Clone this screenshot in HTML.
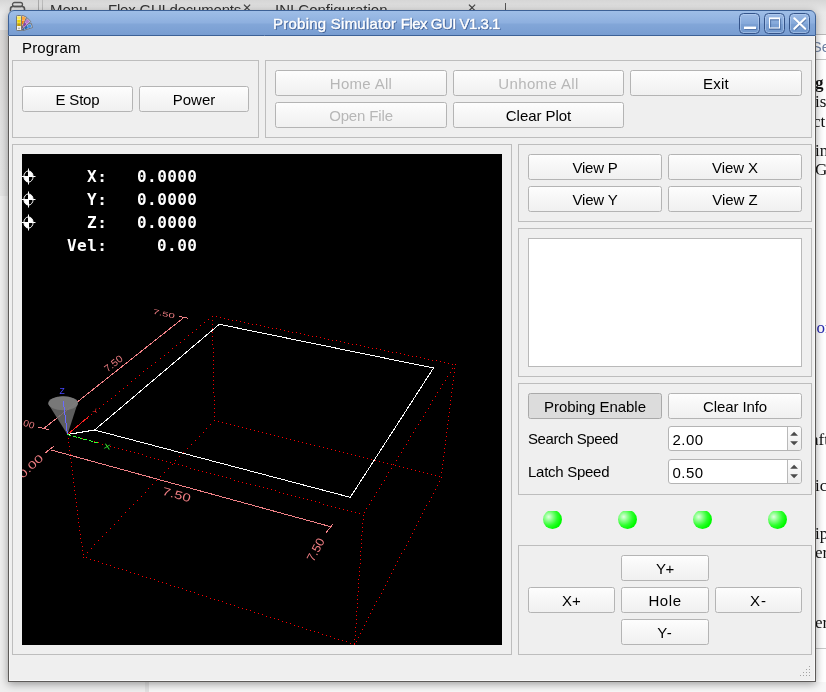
<!DOCTYPE html>
<html>
<head>
<meta charset="utf-8">
<title>Probing Simulator Flex GUI V1.3.1</title>
<style>
html,body{margin:0;padding:0;}
body{width:826px;height:692px;overflow:hidden;position:relative;background:#fff;font-family:"Liberation Sans",sans-serif;font-size:15px;color:#000;}
.abs{position:absolute;will-change:transform;}
/* ---------- background (browser behind) ---------- */
#bgtop{left:0;top:0;width:826px;height:34px;background:linear-gradient(#d6d6d6,#e9e9e9 12px,#ececec 34px);}
.bgt{color:#333;font-size:15px;white-space:pre;filter:blur(0.4px);}
.serif{font-family:"Liberation Serif",serif;font-size:17px;color:#111;white-space:pre;}
/* ---------- window ---------- */
#win{left:8px;top:10px;width:808px;height:672px;background:#efefef;box-shadow:0 2px 8px 0 rgba(0,0,0,.38);border-radius:6px 6px 0 0;}
#winb{left:8px;top:36px;width:806px;height:645px;border:1px solid #5d5b59;border-top:none;box-shadow:inset 1px -1px 0 #f8f8f8,inset -1px 0 0 #f8f8f8;}
#title{left:8px;top:10px;width:808px;height:26px;box-sizing:border-box;border:1px solid #3d6196;border-radius:6px 6px 0 0;background:linear-gradient(#9fbee7,#8eb0df 48%,#82a6d8 56%,#789dd1);}
#ttext{left:0px;top:10px;width:773px;height:26px;line-height:27px;text-align:center;color:#fff;font-size:15px;-webkit-text-stroke:.45px #fff;text-shadow:1px 1px 0 #3f6097,0 1px 0 #4b6da3,1px 0 1px #5575aa;white-space:pre;letter-spacing:-.11px;}
.tb{top:13px;width:21px;height:21px;box-sizing:border-box;border:1px solid #34548a;border-radius:4.5px;background:linear-gradient(#9dbbe5,#85a9da 50%,#7ba0d3 52%,#7198cd);box-shadow:inset 0 0 0 1px rgba(190,212,242,.55);}
/* ---------- widgets ---------- */
.frame{box-sizing:border-box;border:1px solid #bdbdbd;}
.btn{box-sizing:border-box;height:26px;border:1px solid #b4b4b4;border-radius:2.5px;background:linear-gradient(#fdfdfd,#f0f0f0);text-align:center;line-height:26px;font-size:15px;white-space:pre;}
.btn.dis{color:#b7b7b7;}
.btn.chk{background:#dcdcdc;border-color:#a9a9a9;}
.lbl{font-size:15px;white-space:pre;line-height:18px;}
.spin{box-sizing:border-box;height:25px;border:1px solid #b4b4b4;border-radius:3px;background:#fff;font-size:15px;line-height:25px;padding-left:3.5px;letter-spacing:.5px;}
.led{width:19px;height:19px;border-radius:50%;background:radial-gradient(circle at 30% 36%,#e2ffe2 0,#8cff8c 22%,#2dff2d 48%,#00fb00 70%,#00ec00 100%);clip-path:inset(1px 0 .2px 0);}
</style>
</head>
<body>
<!-- background -->
<div id="bgtop" class="abs"></div>
<div class="abs" style="left:0;top:30px;width:10px;height:166px;background:linear-gradient(#dbd9d7,#e3e3e3 60%,#e6e6e6);"></div>
<div class="abs" style="left:0;top:196px;width:10px;height:496px;background:#efefef;"></div>
<div class="abs" style="left:0;top:682px;width:145px;height:10px;background:#efefef;"></div>
<div class="abs" style="left:145px;top:682px;width:4px;height:10px;background:#e2e2e2;"></div>
<div class="abs" style="left:149px;top:682px;width:677px;height:10px;background:#f7f7f7;"></div>
<div class="abs" style="left:814px;top:34px;width:12px;height:1px;background:#b9b9b9;"></div>
<div class="abs" style="left:814px;top:59px;width:12px;height:1px;background:#c4c4c4;"></div>
<div class="abs" style="left:814px;top:648px;width:12px;height:1px;background:#c8c8c8;"></div>
<!-- browser tab bar behind -->
<svg class="abs" style="left:9px;top:1px" width="18" height="12" viewBox="0 0 18 12"><rect x="3.5" y="1.5" width="10" height="4" rx="2" fill="none" stroke="#555" stroke-width="1.3"/><rect x="1.5" y="5.5" width="14" height="8" rx="2.5" fill="none" stroke="#555" stroke-width="1.6"/></svg>
<div class="abs" style="left:38px;top:0;width:1px;height:12px;background:#aaa;"></div>
<div class="abs" style="left:42px;top:0;width:1px;height:12px;background:#bbb;"></div>
<div class="abs bgt" style="left:50px;top:1px;">Menu</div>
<div class="abs bgt" style="left:108px;top:1px;letter-spacing:-.2px;">Flex GUI documents</div>
<div class="abs bgt" style="left:242px;top:1px;color:#444;font-size:12px;">✕</div>
<div class="abs bgt" style="left:275px;top:1px;">INI Configuration</div>
<div class="abs bgt" style="left:467px;top:1px;color:#444;font-size:12px;">✕</div>
<div class="abs" style="left:505px;top:3px;width:1px;height:9px;background:#555;"></div>
<!-- web page behind, right edge -->
<div class="abs" style="left:816px;top:37px;width:10px;height:20px;overflow:hidden;"><div style="margin-left:-4px;font-size:14.5px;line-height:20px;color:#6f82a3;white-space:pre;">Se</div></div>
<div class="abs" style="left:816px;top:73px;width:10px;overflow:hidden;"><div class="serif" style="margin-left:-1px;line-height:19.3px;"><b>g</b>
is
<span style="margin-left:-2px">ct</span></div></div>
<div class="abs" style="left:816px;top:141px;width:10px;overflow:hidden;"><div class="serif" style="margin-left:-1px;line-height:19.3px;">in
G</div></div>
<div class="abs" style="left:816px;top:318px;width:10px;overflow:hidden;"><div class="serif" style="color:#2a2ab0;margin-left:.5px;">or</div></div>
<div class="abs" style="left:816px;top:430px;width:10px;overflow:hidden;"><div class="serif" style="margin-left:-5px;">aft</div></div>
<div class="abs" style="left:816px;top:476px;width:10px;overflow:hidden;"><div class="serif" style="margin-left:-1px;">ic</div></div>
<div class="abs" style="left:816px;top:524px;width:10px;overflow:hidden;"><div class="serif" style="margin-left:-1px;line-height:19.3px;">ip
er</div></div>
<div class="abs" style="left:816px;top:612.5px;width:10px;overflow:hidden;"><div class="serif" style="margin-left:-1px;">er</div></div>

<!-- window -->
<div id="win" class="abs"></div>
<div id="title" class="abs"></div>
<div id="ttext" class="abs"><span style="letter-spacing:.24px">Probing Simulator </span><span style="letter-spacing:-.5px">Flex GUI V1.3.1</span></div>
<!-- app icon -->
<svg class="abs" style="left:16px;top:15px" width="17" height="16" viewBox="0 0 17 16">
<g transform="rotate(72 2.6 14.5)"><rect x="0.4" y="0.6" width="4.6" height="15" fill="#dfe6f2" stroke="#6d6d6d" stroke-width=".8"/><rect x="1" y="1.4" width="3.4" height="3.4" fill="#4a90e0"/><rect x="1" y="5.2" width="3.4" height="3.4" fill="#2467b8"/><rect x="1" y="9" width="3.4" height="3" fill="#17498f"/></g>
<g transform="rotate(47 2.6 14.5)"><rect x="0.4" y="0.2" width="4.6" height="15" fill="#e8e0ee" stroke="#6d6d6d" stroke-width=".8"/><rect x="1" y="1" width="3.4" height="3.6" fill="#b77ad0"/><rect x="1" y="5" width="3.4" height="3.6" fill="#8e3fb0"/><rect x="1" y="9" width="3.4" height="3.2" fill="#6b2a8c"/></g>
<g transform="rotate(23 2.6 14.5)"><rect x="0.4" y="0" width="4.6" height="15" fill="#f3e6d6" stroke="#6d6d6d" stroke-width=".8"/><rect x="1" y="0.8" width="3.4" height="3.6" fill="#ffa63a"/><rect x="1" y="4.8" width="3.4" height="3.6" fill="#f57d0c"/><rect x="1" y="8.8" width="3.4" height="3.2" fill="#cf5f00"/></g>
<rect x="0.5" y="0.5" width="5" height="15" rx=".8" fill="#f2f2ea" stroke="#6d6d6d" stroke-width=".9"/><rect x="1.2" y="1.4" width="3.6" height="3" fill="#fce94f"/><rect x="1.2" y="4.8" width="3.6" height="3" fill="#edd400"/><rect x="1.2" y="8.2" width="3.6" height="2.8" fill="#c4a000"/><circle cx="3" cy="13.3" r="0.9" fill="#a8a8a8"/>
</svg>
<!-- window buttons -->
<div class="abs tb" style="left:739px;width:21px"></div>
<div class="abs tb" style="left:764px;width:21px"></div>
<div class="abs tb" style="left:789px;width:21px"></div>
<svg class="abs" style="left:736px;top:10px" width="80" height="26" viewBox="736 10 80 26">
<g fill="none" stroke="#35558a" stroke-opacity=".55" stroke-width="2" transform="translate(.6 1)">
<path d="M744 28 h12"/><rect x="769.5" y="18.5" width="10" height="9.5"/><path d="M794.3 18.3 L805.2 28.8 M805.2 18.3 L794.3 28.8"/>
</g>
<g fill="none" stroke="#fff">
<path d="M744 27.8 h12" stroke-width="2.4"/>
<rect x="769.5" y="18.5" width="10" height="9.5" stroke-width="1"/><path d="M769 18.3 h11" stroke-width="1.8"/>
<path d="M794.3 18.3 L805.2 28.8 M805.2 18.3 L794.3 28.8" stroke-width="2.1" stroke-linecap="round"/>
</g>
</svg>
<div id="winb" class="abs"></div>

<!-- menu -->
<div class="abs lbl" style="left:22px;top:39px;letter-spacing:.15px;">Program</div>

<!-- frame A -->
<div class="abs frame" style="left:12px;top:60px;width:247px;height:78px;"></div>
<div class="abs btn" style="left:22px;top:86px;width:111px;letter-spacing:-0.2px;">E Stop</div>
<div class="abs btn" style="left:139px;top:86px;width:110px;">Power</div>

<!-- frame B -->
<div class="abs frame" style="left:265px;top:60px;width:547px;height:78px;"></div>
<div class="abs btn dis" style="left:275px;top:70px;width:172px;letter-spacing:0.3px;">Home All</div>
<div class="abs btn dis" style="left:453px;top:70px;width:171px;letter-spacing:0.38px;">Unhome All</div>
<div class="abs btn" style="left:630px;top:70px;width:172px;letter-spacing:0.2px;">Exit</div>
<div class="abs btn dis" style="left:275px;top:102px;width:172px;letter-spacing:-0.15px;">Open File</div>
<div class="abs btn" style="left:453px;top:102px;width:171px;letter-spacing:-0.05px;">Clear Plot</div>

<!-- frame C: plot -->
<div class="abs frame" style="left:12px;top:144px;width:500px;height:511px;"></div>
<svg class="abs" style="left:22px;top:154px" width="480" height="491" viewBox="22 154 480 491">
<rect x="22" y="154" width="480" height="491" fill="#000"/>
<path id="limits" d="M67 434.5h1M71 431.5h1M75 427.5h1M79 424.5h1M83 421.5h1M87 418.5h1M91 414.5h1M95 411.5h1M99 408.5h1M103 404.5h1M107 401.5h1M111 398.5h1M115 395.5h1M119 391.5h1M123 388.5h1M127 385.5h1M131 381.5h1M135 378.5h1M139 375.5h1M143 371.5h1M147 368.5h1M151 365.5h1M155 362.5h1M160 358.5h1M164 355.5h1M168 352.5h1M172 348.5h1M176 345.5h1M180 342.5h1M184 339.5h1M188 335.5h1M192 332.5h1M196 329.5h1M200 325.5h1M204 322.5h1M208 319.5h1M212 316.5h1M216 316.5h1M220 317.5h1M224 318.5h1M228 319.5h1M232 320.5h1M236 320.5h1M240 321.5h1M244 322.5h1M248 323.5h1M252 324.5h1M256 324.5h1M260 325.5h1M264 326.5h1M268 327.5h1M272 328.5h1M276 328.5h1M280 329.5h1M284 330.5h1M288 331.5h1M292 332.5h1M296 332.5h1M300 333.5h1M304 334.5h1M308 335.5h1M312 336.5h1M316 336.5h1M320 337.5h1M324 338.5h1M328 339.5h1M332 340.5h1M336 340.5h1M340 341.5h1M344 342.5h1M348 343.5h1M352 344.5h1M356 344.5h1M360 345.5h1M364 346.5h1M368 347.5h1M372 348.5h1M376 348.5h1M380 349.5h1M384 350.5h1M388 351.5h1M392 352.5h1M396 352.5h1M400 353.5h1M404 354.5h1M408 355.5h1M412 356.5h1M416 356.5h1M420 357.5h1M424 358.5h1M428 359.5h1M432 360.5h1M436 360.5h1M440 361.5h1M444 362.5h1M448 363.5h1M452 364.5h1M455 364.5h1M452 368.5h1M450 372.5h1M447 376.5h1M445 380.5h1M442 384.5h1M440 388.5h1M437 392.5h1M435 396.5h1M432 400.5h1M430 404.5h1M428 408.5h1M425 412.5h1M423 416.5h1M420 420.5h1M418 424.5h1M415 428.5h1M413 432.5h1M410 436.5h1M408 440.5h1M406 444.5h1M403 448.5h1M401 452.5h1M398 456.5h1M396 460.5h1M393 464.5h1M391 468.5h1M388 472.5h1M386 476.5h1M384 480.5h1M381 484.5h1M379 488.5h1M376 492.5h1M374 496.5h1M371 500.5h1M369 504.5h1M366 508.5h1M364 512.5h1M363 515.5h1M359 513.5h1M355 512.5h1M351 511.5h1M347 510.5h1M343 509.5h1M339 508.5h1M335 507.5h1M331 506.5h1M327 505.5h1M323 504.5h1M319 502.5h1M315 501.5h1M311 500.5h1M307 499.5h1M303 498.5h1M299 497.5h1M295 496.5h1M291 495.5h1M287 494.5h1M283 493.5h1M279 492.5h1M275 490.5h1M271 489.5h1M267 488.5h1M263 487.5h1M259 486.5h1M255 485.5h1M250 484.5h1M246 483.5h1M242 482.5h1M238 481.5h1M234 480.5h1M230 478.5h1M226 477.5h1M222 476.5h1M218 475.5h1M214 474.5h1M210 473.5h1M206 472.5h1M202 471.5h1M198 470.5h1M194 469.5h1M190 468.5h1M186 466.5h1M182 465.5h1M178 464.5h1M174 463.5h1M170 462.5h1M166 461.5h1M162 460.5h1M158 459.5h1M154 458.5h1M150 457.5h1M146 456.5h1M142 454.5h1M138 453.5h1M134 452.5h1M130 451.5h1M126 450.5h1M122 449.5h1M118 448.5h1M114 447.5h1M110 446.5h1M106 445.5h1M102 444.5h1M98 442.5h1M94 441.5h1M90 440.5h1M86 439.5h1M82 438.5h1M78 437.5h1M74 436.5h1M70 435.5h1M83 557.5h1M87 552.5h1M91 548.5h1M94 544.5h1M98 540.5h1M102 536.5h1M106 532.5h1M110 528.5h1M114 524.5h1M118 520.5h1M121 516.5h1M125 512.5h1M129 508.5h1M133 504.5h1M137 500.5h1M141 496.5h1M145 492.5h1M148 488.5h1M152 484.5h1M156 480.5h1M160 476.5h1M164 472.5h1M168 468.5h1M172 464.5h1M175 460.5h1M179 456.5h1M183 452.5h1M187 448.5h1M191 444.5h1M195 440.5h1M199 436.5h1M203 432.5h1M206 428.5h1M210 424.5h1M214 420.5h1M218 421.5h1M222 422.5h1M226 423.5h1M230 424.5h1M234 425.5h1M238 426.5h1M242 427.5h1M246 428.5h1M250 429.5h1M254 430.5h1M258 431.5h1M262 432.5h1M266 433.5h1M270 434.5h1M274 435.5h1M278 436.5h1M282 437.5h1M286 438.5h1M290 439.5h1M294 440.5h1M298 441.5h1M302 442.5h1M306 443.5h1M310 444.5h1M314 445.5h1M319 446.5h1M323 447.5h1M327 448.5h1M331 449.5h1M335 450.5h1M339 451.5h1M343 452.5h1M347 453.5h1M351 454.5h1M355 455.5h1M359 456.5h1M363 457.5h1M367 458.5h1M371 459.5h1M375 460.5h1M379 461.5h1M383 462.5h1M387 463.5h1M391 464.5h1M395 465.5h1M399 466.5h1M403 467.5h1M407 468.5h1M411 469.5h1M415 470.5h1M419 471.5h1M423 472.5h1M427 473.5h1M431 474.5h1M435 475.5h1M439 476.5h1M441 477.5h1M439 481.5h1M437 485.5h1M435 489.5h1M433 493.5h1M431 497.5h1M429 501.5h1M426 505.5h1M424 509.5h1M422 513.5h1M420 517.5h1M418 521.5h1M416 525.5h1M414 529.5h1M412 533.5h1M410 537.5h1M408 541.5h1M406 545.5h1M404 549.5h1M401 553.5h1M399 557.5h1M397 561.5h1M395 565.5h1M393 569.5h1M391 573.5h1M389 577.5h1M387 581.5h1M385 585.5h1M383 589.5h1M381 593.5h1M379 597.5h1M376 601.5h1M374 605.5h1M372 609.5h1M370 613.5h1M368 617.5h1M366 621.5h1M364 625.5h1M362 629.5h1M360 633.5h1M358 637.5h1M356 641.5h1M354 644.5h1M350 643.5h1M346 641.5h1M342 640.5h1M338 639.5h1M334 638.5h1M330 636.5h1M326 635.5h1M322 634.5h1M318 632.5h1M314 631.5h1M310 630.5h1M306 629.5h1M302 627.5h1M298 626.5h1M294 625.5h1M290 623.5h1M286 622.5h1M282 621.5h1M278 619.5h1M274 618.5h1M270 617.5h1M266 616.5h1M262 614.5h1M258 613.5h1M254 612.5h1M250 610.5h1M246 609.5h1M242 608.5h1M238 607.5h1M234 605.5h1M230 604.5h1M226 603.5h1M222 601.5h1M218 600.5h1M214 599.5h1M210 598.5h1M206 596.5h1M202 595.5h1M198 594.5h1M194 592.5h1M190 591.5h1M186 590.5h1M182 588.5h1M178 587.5h1M174 586.5h1M170 585.5h1M166 583.5h1M162 582.5h1M158 581.5h1M154 579.5h1M150 578.5h1M146 577.5h1M142 576.5h1M138 574.5h1M134 573.5h1M130 572.5h1M126 570.5h1M122 569.5h1M118 568.5h1M114 567.5h1M110 565.5h1M106 564.5h1M102 563.5h1M98 561.5h1M94 560.5h1M90 559.5h1M86 557.5h1M68 438.5h1M68 442.5h1M69 446.5h1M69 450.5h1M70 454.5h1M70 458.5h1M71 462.5h1M71 466.5h1M72 470.5h1M72 474.5h1M73 478.5h1M73 482.5h1M74 486.5h1M74 490.5h1M75 494.5h1M75 498.5h1M76 502.5h1M76 506.5h1M77 510.5h1M77 514.5h1M78 518.5h1M78 522.5h1M79 526.5h1M79 530.5h1M80 534.5h1M80 538.5h1M81 542.5h1M82 546.5h1M82 550.5h1M83 554.5h1M212 320.5h1M212 324.5h1M212 328.5h1M212 332.5h1M212 336.5h1M212 340.5h1M212 344.5h1M213 348.5h1M213 352.5h1M213 356.5h1M213 360.5h1M213 364.5h1M213 368.5h1M213 372.5h1M213 376.5h1M213 380.5h1M213 384.5h1M213 388.5h1M213 392.5h1M214 396.5h1M214 400.5h1M214 404.5h1M214 408.5h1M214 412.5h1M214 416.5h1M454 368.5h1M454 372.5h1M453 376.5h1M453 380.5h1M452 384.5h1M452 388.5h1M451 392.5h1M451 396.5h1M450 400.5h1M450 404.5h1M449 408.5h1M449 412.5h1M448 416.5h1M448 420.5h1M447 424.5h1M447 428.5h1M446 432.5h1M446 436.5h1M445 440.5h1M445 444.5h1M444 448.5h1M444 452.5h1M443 456.5h1M443 460.5h1M442 464.5h1M442 468.5h1M441 472.5h1M363 519.5h1M362 523.5h1M362 527.5h1M362 531.5h1M361 535.5h1M361 539.5h1M361 543.5h1M361 547.5h1M360 551.5h1M360 555.5h1M360 559.5h1M360 563.5h1M359 567.5h1M359 571.5h1M359 575.5h1M358 579.5h1M358 583.5h1M358 587.5h1M358 591.5h1M357 595.5h1M357 599.5h1M357 603.5h1M357 607.5h1M356 611.5h1M356 615.5h1M356 619.5h1M356 623.5h1M355 627.5h1M355 631.5h1M355 635.5h1M354 639.5h1M354 643.5h1" stroke="#f00" stroke-width="1" fill="none" shape-rendering="crispEdges"/>
<g stroke="#f28287" stroke-width="1" fill="none" shape-rendering="crispEdges">
<path d="M44.6 427.8 L183.3 318 M37.5 426.8 L49.3 429.8 M178.8 316.4 L188.5 318.3"/>
<path d="M51 450 L330.7 526.7 M45.4 452.8 L53.8 446.2 M325.8 533 L332.8 524.2"/>
</g>
<path d="M67.5 434.5 L94.6 430 L219.3 324.3 L433.5 368 L350.3 497.3 L94.6 430" stroke="#fff" stroke-width="1" fill="none" shape-rendering="crispEdges"/>
<!-- tool cone -->
<path d="M67.5 434.5 L48.6 404.5 A14.8 7 0 0 1 77.9 402.5 Z" fill="#6d6d6d" fill-opacity="0.86"/>
<ellipse cx="63.2" cy="403.3" rx="14.8" ry="7" fill="#7b7b7b" fill-opacity="0.9"/>
<!-- axes -->
<g fill="none" stroke-width="1" shape-rendering="crispEdges">
<path d="M67.5 434.5 L63.2 401" stroke="#6a6aff"/>
<path d="M67.5 434.5 L88.7 416.6" stroke="#ff2020"/>
<path d="M67.5 434.5 L99.5 443.5" stroke="#30ff30" stroke-dasharray="4 1.5"/>
</g>
<g font-family="'Liberation Sans',sans-serif" font-size="9">
<text x="59.6" y="394.4" fill="#4646ff" font-size="8.5">Z</text>
<text transform="translate(94.5 414.5) rotate(-38) scale(.8 .55)" fill="#ff3030" font-size="10">Y</text>
<text transform="translate(103.5 448.3) rotate(12) scale(1 .7)" fill="#30ee30" font-size="10">X</text>
</g>
<!-- dimension labels -->
<g font-family="'Liberation Sans',sans-serif" fill="#ee7d82" font-size="11">
<text transform="translate(107.5 372.5) rotate(-38) scale(.95 .9)">7.50</text>
<text transform="translate(152.5 313.5) rotate(13) scale(1.05 .62)">7.50</text>
<text transform="translate(14.6 422.8) rotate(18) scale(.92 .85)">0.00</text>
<text transform="translate(161.5 494.5) rotate(15.5) scale(1.25 .95)" font-size="12">7.50</text>
<text transform="translate(22.7 479) rotate(-43) scale(1.25 .9)" font-size="12">0.00</text>
<text transform="translate(313.5 562.5) rotate(-62) scale(1.05 1)" font-size="12">7.50</text>
</g>
<!-- home icons -->
<g id="homes" stroke="#fff" stroke-width="1" fill="none" >
<g transform="translate(28.5 176.5)"><ellipse rx="4.6" ry="5.6"/><path d="M0 0 L0 -5.6 A4.6 5.6 0 0 1 4.6 0 Z M0 0 L0 5.6 A4.6 5.6 0 0 1 -4.6 0 Z" fill="#fff" stroke="none"/><path d="M-7 0 H7 M0 -8 V8"/></g>
<g transform="translate(28.5 199.5)"><ellipse rx="4.6" ry="5.6"/><path d="M0 0 L0 -5.6 A4.6 5.6 0 0 1 4.6 0 Z M0 0 L0 5.6 A4.6 5.6 0 0 1 -4.6 0 Z" fill="#fff" stroke="none"/><path d="M-7 0 H7 M0 -8 V8"/></g>
<g transform="translate(28.5 222.5)"><ellipse rx="4.6" ry="5.6"/><path d="M0 0 L0 -5.6 A4.6 5.6 0 0 1 4.6 0 Z M0 0 L0 5.6 A4.6 5.6 0 0 1 -4.6 0 Z" fill="#fff" stroke="none"/><path d="M-7 0 H7 M0 -8 V8"/></g>
</g>
<!-- DRO -->
<g font-family="'DejaVu Sans Mono','Liberation Mono',monospace" font-weight="bold" font-size="16" fill="#fff" style="white-space:pre" text-anchor="end">
<text x="107" y="182" textLength="20" lengthAdjust="spacing">X:</text><text x="197" y="182" textLength="60" lengthAdjust="spacing">0.0000</text>
<text x="107" y="205" textLength="20" lengthAdjust="spacing">Y:</text><text x="197" y="205" textLength="60" lengthAdjust="spacing">0.0000</text>
<text x="107" y="228" textLength="20" lengthAdjust="spacing">Z:</text><text x="197" y="228" textLength="60" lengthAdjust="spacing">0.0000</text>
<text x="107" y="251" textLength="40" lengthAdjust="spacing">Vel:</text><text x="197" y="251" textLength="40" lengthAdjust="spacing">0.00</text>
</g>
</svg>

<!-- frame D -->
<div class="abs frame" style="left:518px;top:144px;width:294px;height:78px;"></div>
<div class="abs btn" style="left:528px;top:154px;width:134px;letter-spacing:-0.2px;">View P</div>
<div class="abs btn" style="left:668px;top:154px;width:134px;letter-spacing:-0.1px;">View X</div>
<div class="abs btn" style="left:528px;top:186px;width:134px;letter-spacing:-0.2px;">View Y</div>
<div class="abs btn" style="left:668px;top:186px;width:134px;letter-spacing:-0.05px;">View Z</div>

<!-- frame E -->
<div class="abs frame" style="left:518px;top:228px;width:294px;height:149px;"></div>
<div class="abs" style="left:528px;top:238px;width:274px;height:129px;box-sizing:border-box;border:1px solid #b9b9b9;background:#fff;"></div>

<!-- frame F -->
<div class="abs frame" style="left:518px;top:383px;width:294px;height:112px;"></div>
<div class="abs btn chk" style="left:528px;top:393px;width:134px;letter-spacing:-0.05px;">Probing Enable</div>
<div class="abs btn" style="left:668px;top:393px;width:134px;letter-spacing:-0.1px;">Clear Info</div>
<div class="abs lbl" style="left:528px;top:430px;letter-spacing:-.42px;">Search Speed</div>
<div class="abs lbl" style="left:528px;top:463px;letter-spacing:-.27px;">Latch Speed</div>
<div class="abs spin" style="left:668px;top:426px;width:134px;">2.00</div>
<div class="abs" style="left:787px;top:427px;width:14px;height:23px;box-sizing:border-box;border-left:1px solid #b9b9b9;border-radius:0 2.5px 2.5px 0;background:linear-gradient(#fcfcfc,#ededed);"></div>
<svg class="abs" style="left:787px;top:426px" width="15" height="25" viewBox="0 0 15 25"><path d="M3.2 9.8 L7.1 5.8 L11 9.8 Z M3.2 15.2 L7.1 19.2 L11 15.2 Z" fill="#4b4b4b"/></svg>
<div class="abs spin" style="left:668px;top:459px;width:134px;">0.50</div>
<div class="abs" style="left:787px;top:460px;width:14px;height:23px;box-sizing:border-box;border-left:1px solid #b9b9b9;border-radius:0 2.5px 2.5px 0;background:linear-gradient(#fcfcfc,#ededed);"></div>
<svg class="abs" style="left:787px;top:459px" width="15" height="25" viewBox="0 0 15 25"><path d="M3.2 9.8 L7.1 5.8 L11 9.8 Z M3.2 15.2 L7.1 19.2 L11 15.2 Z" fill="#4b4b4b"/></svg>

<!-- LEDs -->
<div class="abs led" style="left:543px;top:510px;"></div>
<div class="abs led" style="left:618px;top:510px;"></div>
<div class="abs led" style="left:693px;top:510px;"></div>
<div class="abs led" style="left:768px;top:510px;"></div>

<!-- frame G -->
<div class="abs frame" style="left:518px;top:545px;width:294px;height:110px;"></div>
<div class="abs btn" style="left:621px;top:555px;width:88px;letter-spacing:-0.5px;">Y+</div>
<div class="abs btn" style="left:528px;top:587px;width:87px;">X+</div>
<div class="abs btn" style="left:621px;top:587px;width:88px;letter-spacing:0.6px;">Hole</div>
<div class="abs btn" style="left:715px;top:587px;width:87px;letter-spacing:1px;">X-</div>
<div class="abs btn" style="left:621px;top:619px;width:88px;letter-spacing:1px;">Y-</div>

<svg class="abs" style="left:798px;top:664px" width="14" height="14" viewBox="798 664 14 14"><path d="M809 666.5h1M806 669.5h1M809 669.5h1M803 672.5h1M806 672.5h1M809 672.5h1M800 675.5h1M803 675.5h1M806 675.5h1M809 675.5h1" stroke="#a3a3a3" stroke-width="1" shape-rendering="crispEdges"/></svg>
</body>
</html>
